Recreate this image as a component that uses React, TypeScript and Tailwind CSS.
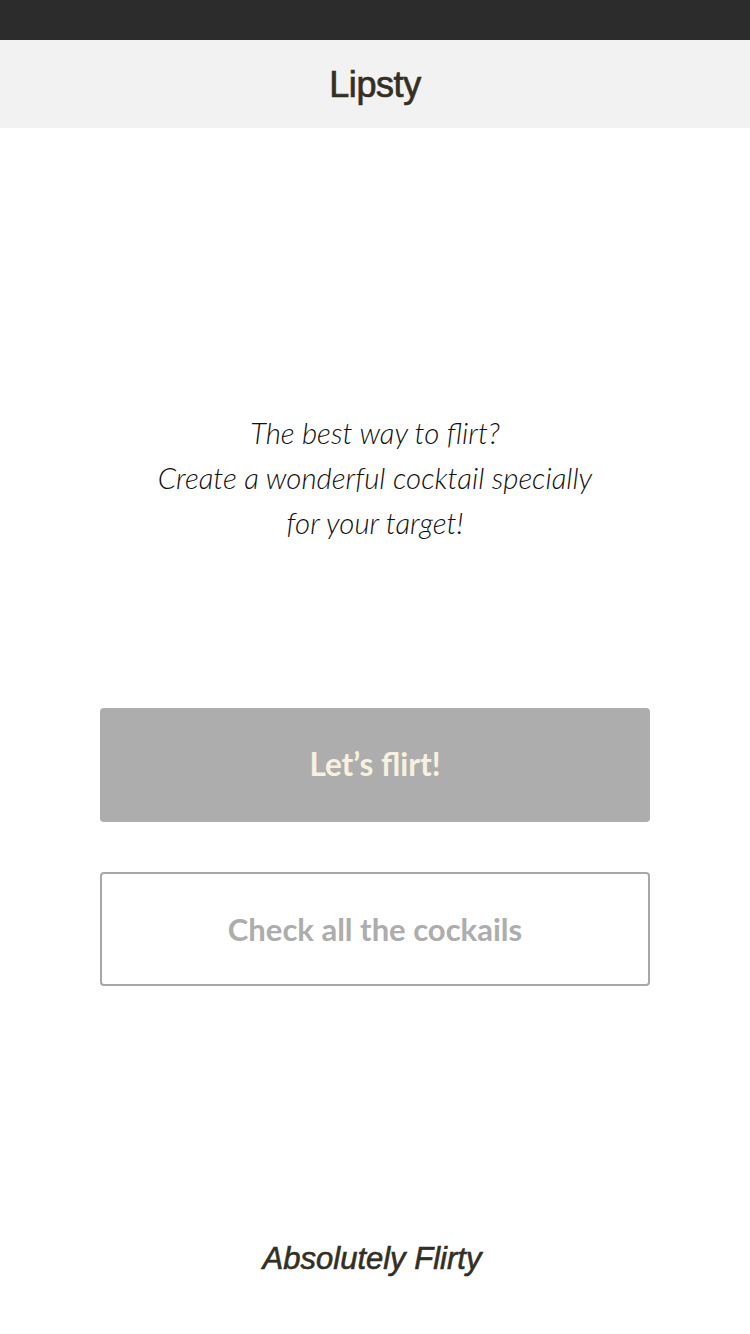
export default function App() {
  return (
    <div className="w-[750px] h-[1334px] bg-white flex flex-col">
      <div className="h-[40px] bg-[#2c2c2c] shrink-0" />
      <div className="h-[88px] bg-[#f2f2f2] shrink-0 flex items-center justify-center">
        <span className="text-[36px] leading-none text-[#332f24] font-['Liberation_Sans',Arial,sans-serif] tracking-[-0.4px] [-webkit-text-stroke:0.7px_#332f24] translate-y-[1px]">Lipsty</span>
      </div>
      <div className="flex flex-col items-center pt-[282px]">
        <p className="text-center italic font-light text-[29.4px] leading-[45px] text-[#111111] font-['Lato',sans-serif]">
          The best way to flirt?<br />
          Create a wonderful cocktail specially<br />
          for your target!
        </p>
        <button className="mt-[163px] w-[550px] h-[114px] rounded-[4px] bg-[#adadad] text-[#f7f2de] font-bold text-[31.5px] font-['Lato',sans-serif] flex items-center justify-center">
          Let’s flirt!
        </button>
        <button className="mt-[50px] w-[550px] h-[114px] rounded-[4px] border-2 border-[#a8a8a8] bg-white text-[#adadad] font-bold text-[31px] font-['Lato',sans-serif] flex items-center justify-center">
          Check all the cockails
        </button>
        <p className="mt-[255px] h-[36px] leading-[36px] italic text-[31px] text-[#332f24] font-['Liberation_Sans',Arial,sans-serif] [-webkit-text-stroke:0.6px_#332f24] -translate-x-[3px]">
          Absolutely Flirty
        </p>
      </div>
    </div>
  );
}
